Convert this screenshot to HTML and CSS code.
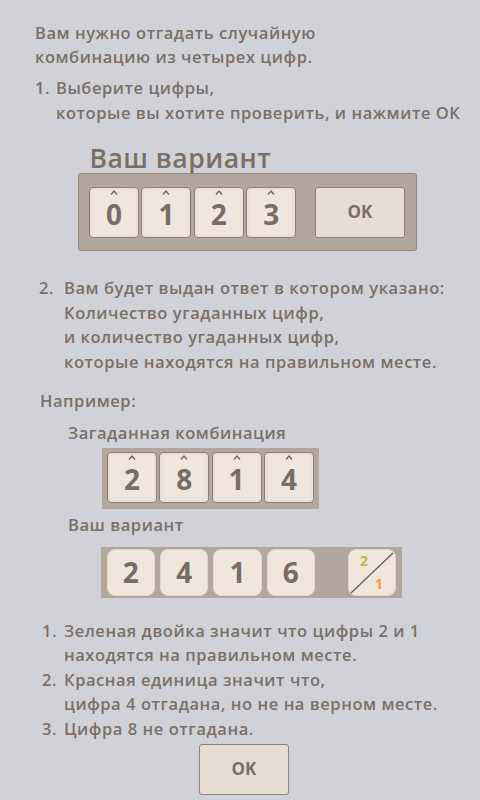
FILE: index.html
```html
<!DOCTYPE html>
<html lang="ru">
<head>
<meta charset="utf-8">
<link rel="stylesheet" href="styles.css">
</head>
<body>
<div class="page">
  <p class="intro">Вам нужно отгадать случайную<br>комбинацию из четырех цифр.</p>
  <div class="step step1"><span class="num n1">1.</span><span>Выберите цифры,<br>которые вы хотите проверить, и нажмите ОК</span></div>
  <h1 class="title">Ваш вариант</h1>
  <div class="box box-main">
    <div class="tiles">
      <div class="tile"><svg class="caret" viewBox="0 0 8 5" width="8" height="5"><polyline points="1,4.5 4,1 7,4.5"/></svg><span class="digit">0</span></div>
      <div class="tile"><svg class="caret" viewBox="0 0 8 5" width="8" height="5"><polyline points="1,4.5 4,1 7,4.5"/></svg><span class="digit">1</span></div>
      <div class="tile"><svg class="caret" viewBox="0 0 8 5" width="8" height="5"><polyline points="1,4.5 4,1 7,4.5"/></svg><span class="digit">2</span></div>
      <div class="tile"><svg class="caret" viewBox="0 0 8 5" width="8" height="5"><polyline points="1,4.5 4,1 7,4.5"/></svg><span class="digit">3</span></div>
    </div>
    <div class="btn">OK</div>
  </div>
  <div class="step step2"><span class="num n2">2.</span><span>Вам будет выдан ответ в котором указано:<br>Количество угаданных цифр,<br>и количество угаданных цифр,<br>которые находятся на правильном месте.</span></div>
  <p class="label l-example">Например:</p>
  <p class="label l-sub l-secret">Загаданная комбинация</p>
  <div class="box box-secret">
    <div class="tile"><svg class="caret" viewBox="0 0 8 5" width="8" height="5"><polyline points="1,4.5 4,1 7,4.5"/></svg><span class="digit">2</span></div>
    <div class="tile"><svg class="caret" viewBox="0 0 8 5" width="8" height="5"><polyline points="1,4.5 4,1 7,4.5"/></svg><span class="digit">8</span></div>
    <div class="tile"><svg class="caret" viewBox="0 0 8 5" width="8" height="5"><polyline points="1,4.5 4,1 7,4.5"/></svg><span class="digit">1</span></div>
    <div class="tile"><svg class="caret" viewBox="0 0 8 5" width="8" height="5"><polyline points="1,4.5 4,1 7,4.5"/></svg><span class="digit">4</span></div>
  </div>
  <p class="label l-sub l-guess">Ваш вариант</p>
  <div class="box box-guess">
    <div class="soft">2</div>
    <div class="soft">4</div>
    <div class="soft">1</div>
    <div class="soft">6</div>
    <div class="soft result">
      <svg class="slash" viewBox="0 0 48 47" width="48" height="47"><line x1="3" y1="44" x2="45" y2="4"/></svg>
      <span class="r-top">2</span>
      <span class="r-bot">1</span>
    </div>
  </div>
  <div class="notes">
    <div class="step"><span class="num n3">1.</span><span>Зеленая двойка значит что цифры 2 и 1<br>находятся на правильном месте.</span></div>
    <div class="step"><span class="num n3">2.</span><span>Красная единица значит что,<br>цифра 4 отгадана, но не на верном месте.</span></div>
    <div class="step"><span class="num n3">3.</span><span>Цифра 8 не отгадана.</span></div>
  </div>
  <div class="btn btn-bottom">OK</div>
</div>
</body>
</html>
```
FILE: styles.css
```css
html, body {
  margin: 0;
  padding: 0;
  background: #d1d2d7;
}
body {
  width: 480px;
  height: 800px;
  overflow: hidden;
  font-family: "Open Sans", "DejaVu Sans", sans-serif;
  font-size: 16.5px;
  font-weight: 600;
  letter-spacing: 0.55px;
  line-height: 24.5px;
  color: #7a6f67;
}
.page {
  padding-top: 20.7px;
  display: flex;
  flex-direction: column;
  align-items: flex-start;
}
p, h1 { margin: 0; }
.intro { margin-left: 35px; }
.step { display: flex; }
.num { flex: none; }
.step1 { margin-top: 6.6px; margin-left: 35px; }
.n1 { width: 21px; }
.title {
  margin-top: 18.9px;
  margin-left: 89.5px;
  font-size: 26.5px;
  line-height: 29px;
  font-weight: 600;
  letter-spacing: 0.5px;
}
.box {
  background: #b3a79d;
  display: flex;
  box-sizing: border-box;
}
.box-main {
  margin-left: 78px;
  width: 339px;
  height: 78px;
  border: 1px solid #91857c;
  border-radius: 3px;
  padding: 13px 11px 0 10px;
  justify-content: space-between;
}
.tiles { display: flex; gap: 2.4px; }
.tile {
  width: 50px;
  height: 51px;
  box-sizing: border-box;
  background: #efe6dc;
  border: 1px solid #8a7e75;
  border-radius: 4px;
  box-shadow: inset 0 0 0 2px #e9dfd4;
  display: flex;
  flex-direction: column;
  align-items: center;
}
.caret {
  margin-top: 2px;
  fill: none;
  stroke: #6d635b;
  stroke-width: 1.3;
}
.digit {
  margin-top: 5px;
  font-size: 28px;
  line-height: 28px;
  font-weight: bold;
  letter-spacing: 0;
  color: #786d65;
}
.btn {
  width: 90px;
  height: 51px;
  box-sizing: border-box;
  background: #e6ddd3;
  border: 1px solid #8e8279;
  border-radius: 3px;
  display: flex;
  align-items: center;
  justify-content: center;
  font-weight: bold;
  font-size: 17px;
  letter-spacing: 0;
  color: #7a6f67;
}
.step2 { margin-top: 25.3px; margin-left: 39px; }
.n2 { width: 25px; }
.l-example { margin-top: 14.2px; margin-left: 40px; }
.l-secret { margin-top: 7.5px; }
.l-sub { margin-left: 68px; }
.box-secret {
  margin-top: 2.9px;
  margin-left: 102px;
  width: 217px;
  height: 61px;
  padding: 4px 5px 6px;
  gap: 2.3px;
}
.l-guess { margin-top: 3.5px; }
.box-guess {
  margin-top: 10.1px;
  margin-left: 101px;
  width: 301px;
  height: 51px;
  padding: 2px 6px 2px 5.7px;
  gap: 5px;
}
.soft {
  width: 48.3px;
  height: 47px;
  box-sizing: border-box;
  background: #efe6dc;
  border: 1px solid #e2d8cd;
  border-radius: 8px;
  display: flex;
  align-items: center;
  justify-content: center;
  font-size: 28px;
  font-weight: bold;
  letter-spacing: 0;
  color: #786d65;
}
.result {
  margin-left: auto;
  width: 48px;
  position: relative;
}
.slash {
  position: absolute;
  left: -1px;
  top: -1px;
}
.slash line { stroke: #6e645c; stroke-width: 1.4; }
.r-top, .r-bot {
  position: absolute;
  font-size: 14px;
  line-height: 14px;
  font-weight: bold;
}
.r-top { left: 11px; top: 4px; color: #c5b848; }
.r-bot { left: 26px; top: 27px; color: #f1953a; }
.notes { margin-top: 20.7px; margin-left: 42px; }
.n3 { width: 22px; }
.btn-bottom { margin-top: 2.8px; margin-left: 199px; }
```
